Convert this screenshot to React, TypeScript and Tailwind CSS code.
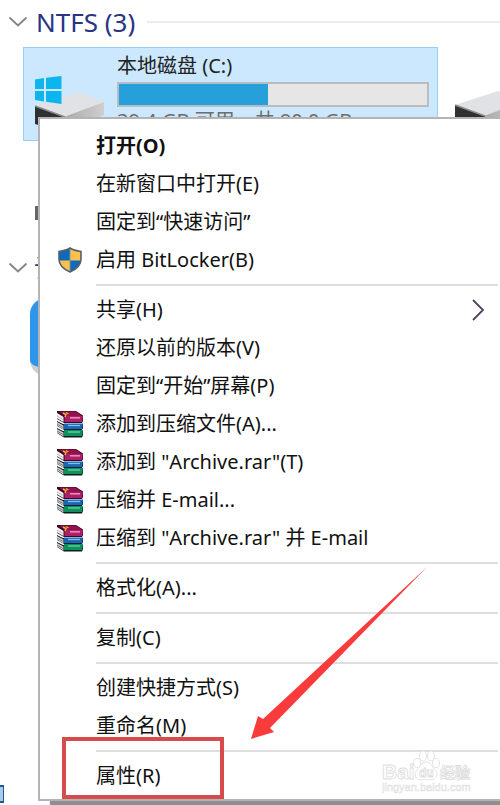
import React from 'react';

interface MenuEntry {
  label: string;
  icon?: 'shield' | 'rar';
  bold?: boolean;
  submenu?: boolean;
}

const menuGroups: MenuEntry[][] = [
  [
    { label: '打开(O)', bold: true },
    { label: '在新窗口中打开(E)' },
    { label: '固定到“快速访问”' },
    { label: '启用 BitLocker(B)', icon: 'shield' },
  ],
  [
    { label: '共享(H)', submenu: true },
    { label: '还原以前的版本(V)' },
    { label: '固定到“开始”屏幕(P)' },
    { label: '添加到压缩文件(A)...', icon: 'rar' },
    { label: '添加到 "Archive.rar"(T)', icon: 'rar' },
    { label: '压缩并 E-mail...', icon: 'rar' },
    { label: '压缩到 "Archive.rar" 并 E-mail', icon: 'rar' },
  ],
  [{ label: '格式化(A)...' }],
  [{ label: '复制(C)' }],
  [{ label: '创建快捷方式(S)' }, { label: '重命名(M)' }],
  [{ label: '属性(R)' }],
];

const GroupChevron = () => (
  <svg viewBox="0 0 20 12" className="h-3 w-5 shrink-0" fill="none" aria-hidden="true">
    <path d="M1.500 1.500 10 9.500l8.500-8" stroke="#858585" strokeWidth="1.800" />
  </svg>
);

const SubmenuArrow = () => (
  <svg viewBox="0 0 12 22" className="h-[22px] w-3 shrink-0" fill="none" aria-hidden="true">
    <path d="M1 1l10 10L1 21" stroke="#553f5e" strokeWidth="1.800" />
  </svg>
);

const ShieldIcon = () => (
  <svg viewBox="0 0 24 26" className="h-[26px] w-6" aria-hidden="true">
    <path d="M12 1C9 3 5 4 1 4.500V12c0 6 4 10 11 13Z" fill="#1268bd" />
    <path d="M12 1c3 2 7 3 11 3.500V12c0 6-4 10-11 13Z" fill="#1268bd" />
    <path d="M12 1c3 2 7 3 11 3.500V13H12Z" fill="#fdc04f" />
    <path d="M1.200 13H12v12C6 22.500 2 19 1.200 13Z" fill="#fdc04f" />
    <path d="M12 2v22M2 13.500h20" stroke="#7a9a86" strokeWidth="1" />
    <path
      d="M12 1C9 3 5 4 1 4.500V12c0 6 4 10 11 13 7-3 11-7 11-13V4.500C19 4 15 3 12 1Z"
      fill="none"
      stroke="#55606a"
      strokeWidth="1.600"
    />
  </svg>
);

const RarIcon = () => (
  <svg viewBox="0 0 28 28" className="size-7" aria-hidden="true">
    {/* green */}
    <path d="M1 18l6 3h20v4l-1 2.500H8L1 23Z" fill="#0c1f18" />
    <path d="M1 19 7.500 22.500v4L1 22.500Z" fill="#d2d2d2" />
    <path d="M1 21l6.500 3.700" stroke="#555" strokeWidth=".7" />
    <path d="M8 20h19l-1 6H8Z" fill="#0f8f5c" />
    <path d="M12 22h12" stroke="#6fd0a6" strokeWidth="1.300" />
    {/* blue */}
    <path d="M1 11l6 3h20v4l-1 2H8L1 16Z" fill="#101c33" />
    <path d="M1 12 7.500 15.500v4L1 15.500Z" fill="#d2d2d2" />
    <path d="M1 14l6.500 3.700" stroke="#555" strokeWidth=".7" />
    <path d="M8 13.500h19l-1 5.500H8Z" fill="#1768b0" />
    <path d="M12 15.500h12" stroke="#7fc0ee" strokeWidth="1.300" />
    {/* magenta */}
    <path d="M1 1h19l7 4.500V11l-1 2H8L1 9Z" fill="#3a0822" />
    <path d="M1 3 7.500 7v5L1 8.200Z" fill="#f4f4f4" />
    <path d="M1 6l6.500 3.800" stroke="#999" strokeWidth=".7" />
    <path d="M3 1.500h16.500l6.500 4.500H9Z" fill="#94124c" />
    <path d="M8.500 6H27l-1 6H8.500Z" fill="#ad1f68" />
    <path d="M14 7.800h10" stroke="#e28ab8" strokeWidth="1.600" />
    <path d="M7 3l3 1.500L9 7M10 2.500l2.500 1.500" fill="none" stroke="#e8b62c" strokeWidth="1.400" />
  </svg>
);

const DriveIcon: React.FC<{ windows?: boolean }> = ({ windows }) => (
  <svg viewBox="0 0 74 60" className="h-[60px] w-[74px] shrink-0" aria-hidden="true">
    <defs>
      <linearGradient id="driveSide" x1="0" x2="1">
        <stop offset="0" stopColor="#a9a9a9" />
        <stop offset="1" stopColor="#cfcfcf" />
      </linearGradient>
    </defs>
    <path d="M1 30 44 16l26 10-39 16Z" fill="#e1e2e5" />
    <path d="M30 41 70 26v13L30 57Z" fill="url(#driveSide)" />
    <path d="M1 30l30 11v16L1 48Z" fill="#303030" />
    <path d="M1 30l30 11" stroke="#8b8b8b" strokeWidth="1.500" />
    {windows && (
      <>
        <path d="M0 2l28-3v29L0 25Z" fill="#cce8ff" />
        <path d="M1 3.500 10 2v11H1ZM12 1.700 27.500 0v13H12ZM1 15h9v10.500L1 24ZM12 15h15.500v13L12 25.700Z" fill="#0db5ee" />
      </>
    )}
  </svg>
);

const MenuItem: React.FC<{ entry: MenuEntry }> = ({ entry }) => (
  <button
    type="button"
    role="menuitem"
    className={`flex h-[38px] w-full items-center pr-4 text-left ${entry.bold ? 'font-bold' : ''}`}
  >
    <span className="flex w-14 shrink-0 items-center justify-center pl-1">
      {entry.icon === 'shield' && <ShieldIcon />}
      {entry.icon === 'rar' && <RarIcon />}
    </span>
    <span className="grow whitespace-nowrap">{entry.label}</span>
    {entry.submenu && <SubmenuArrow />}
  </button>
);

const ContextMenu = () => (
  <div
    role="menu"
    className="absolute top-[117px] right-0 left-[38px] border-2 border-r-0 border-[#b4b4b4] bg-white pt-2 pb-1 text-[#111] shadow-[12px_5px_1px_0_#8f8f8f]"
  >
    {menuGroups.map((group, i) => {
      const last = i === menuGroups.length - 1;
      return (
        <div key={i} className="relative">
          {i > 0 && (
            <div role="separator" className="mr-0.5 ml-14 flex h-3 items-center">
              <div className="h-0.5 w-full bg-[#dedede]" />
            </div>
          )}
          {group.map((entry) => (
            <MenuItem key={entry.label} entry={entry} />
          ))}
          {last && (
            <div className="pointer-events-none absolute -top-2 -bottom-1 left-[22px] w-[162px] border-4 border-[#d84b4b]" />
          )}
        </div>
      );
    })}
  </div>
);

const Watermark = () => (
  <svg viewBox="0 0 92 46" className="absolute top-[750px] right-[26px] h-[46px] w-[92px]" aria-hidden="true">
    <g fill="#fff" stroke="#dcdcdc" strokeWidth=".8">
      <text x="0" y="29" className="font-['Liberation_Sans'] text-[21px] font-bold">Bai</text>
      <ellipse cx="35" cy="13" rx="3.500" ry="4.500" />
      <ellipse cx="41" cy="6" rx="3.500" ry="5" />
      <ellipse cx="49" cy="6" rx="3.500" ry="5" />
      <ellipse cx="54" cy="13" rx="3.500" ry="4.500" />
      <path d="M44 12c5 0 6 5 9 8 4 4 1 10-4 10-3 0-7-1-10 0-6 0-7-6-4-10 3-3 4-8 9-8Z" />
      <text x="37" y="27" className="font-['Liberation_Sans'] text-[12px] font-bold">du</text>
      <text x="58" y="28" className="font-['Noto_Sans_CJK_SC'] text-[15px] font-bold">经验</text>
      <text x="0" y="41" strokeWidth=".5" className="font-['Liberation_Sans'] text-[11px]">jingyan.baidu.com</text>
    </g>
  </svg>
);

const App = () => {
  return (
    <main className="relative min-h-screen overflow-hidden bg-white font-['Noto_Sans','Noto_Sans_CJK_SC',sans-serif] text-[20px] leading-7">
      <section>
        <header className="flex h-11 items-center gap-2 pl-2">
          <GroupChevron />
          <h2 className="text-[26px] whitespace-nowrap text-[#293583]">NTFS (3)</h2>
          <div className="ml-1 h-0.5 grow bg-[#ececec]" />
        </header>
        <div className="flex pt-[3px] pl-[23px]">
          <div className="flex h-[94px] w-[415px] shrink-0 border border-[#99cdf2] bg-[#cce8ff] pr-2">
            <div className="w-[93px] shrink-0 pt-7 pl-2.5">
              <DriveIcon windows />
            </div>
            <div className="grow pt-1">
              <div className="text-[#222]">本地磁盘 (C:)</div>
              <div className="mt-0.5 h-[25px] border-2 border-[#b9bcc0] bg-[#e6e6e6]">
                <div className="h-full bg-[#26a0da]" style={{ width: '48.5%' }} />
              </div>
              <div className="whitespace-nowrap text-[#6d6d6d]">39.4 GB 可用，共 80.0 GB</div>
            </div>
          </div>
          <div className="pt-7 pl-4">
            <DriveIcon />
          </div>
        </div>
        <div className="mt-[65px] ml-[35px] h-3.5 w-2 bg-[#666]" />
      </section>

      <section className="mt-8">
        <header className="flex h-8 items-center gap-1.5 pl-2">
          <GroupChevron />
          <h2 className="text-[26px] whitespace-nowrap text-[#293583]">设备</h2>
        </header>
        <div className="mt-3.5 ml-[30px] size-[78px] rounded-2xl border-b-8 border-[#cfcfcf] bg-[#2d96ec]" />
      </section>

      <button
        type="button"
        aria-label="详细信息"
        className="absolute top-[785px] left-0 h-[18px] w-1 border-y-2 border-r border-[#26568a] bg-[#a8cdea]"
      />

      <ContextMenu />
      <Watermark />

      <svg viewBox="0 0 178 174" className="pointer-events-none absolute top-[566px] left-[250px] h-[174px] w-[178px]" aria-hidden="true">
        <path d="M177 1 20 162l4 4-23 7 7-23 5 3Z" fill="#f93b3b" />
      </svg>
    </main>
  );
};

export default App;
